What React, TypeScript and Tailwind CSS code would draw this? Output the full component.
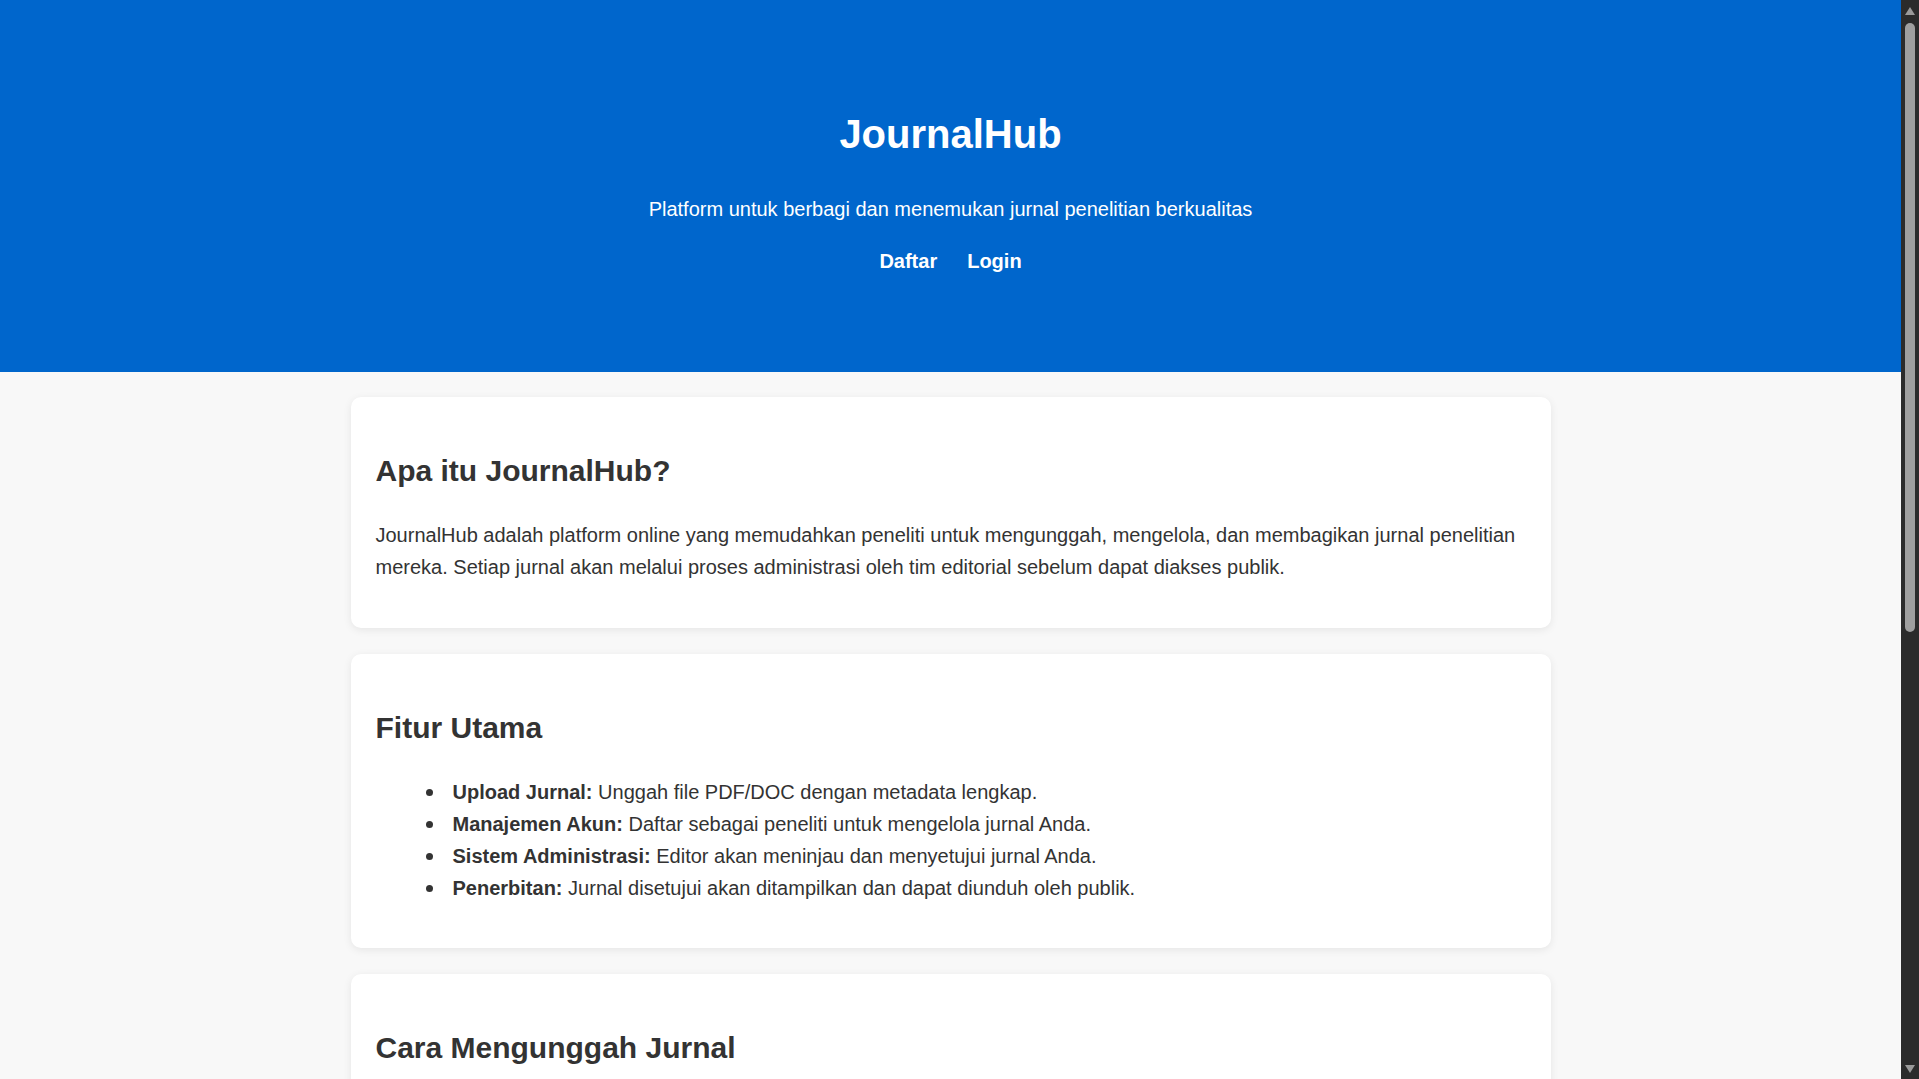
import React from "react";

const Card: React.FC<{ children: React.ReactNode }> = ({ children }) => (
  <section className="w-[1200px] mx-auto bg-white rounded-[10px] shadow-[0_2px_8px_rgba(0,0,0,0.08)] px-[25px] pt-[24px] pb-[24px]">
    {children}
  </section>
);

const H2: React.FC<{ children: React.ReactNode }> = ({ children }) => (
  <h2 className="mt-[26px] text-[30px] leading-[48px] font-bold text-[#333333]">{children}</h2>
);

const Bullet: React.FC<{ children: React.ReactNode }> = ({ children }) => (
  <li className="flex flex-row">
    <span className="w-[27px] shrink-0 flex flex-row items-start">
      <span className="mt-[13px] w-[7px] h-[7px] rounded-full bg-[#333333]" />
    </span>
    <span>{children}</span>
  </li>
);

export default function App() {
  const features = [
    ["Upload Jurnal:", "Unggah file PDF/DOC dengan metadata lengkap."],
    ["Manajemen Akun:", "Daftar sebagai peneliti untuk mengelola jurnal Anda."],
    ["Sistem Administrasi:", "Editor akan meninjau dan menyetujui jurnal Anda."],
    ["Penerbitan:", "Jurnal disetujui akan ditampilkan dan dapat diunduh oleh publik."],
  ];
  const steps = [
    "Daftar akun sebagai peneliti.",
    "Login ke dashboard Anda.",
    "Isi formulir unggah jurnal beserta metadata.",
    "Tunggu proses peninjauan oleh editor.",
  ];
  return (
    <div className="h-screen w-full overflow-hidden flex flex-row font-['Liberation_Sans',Arial,sans-serif] text-[20px] leading-[32px] text-[#333333]">
      <div className="flex-1 h-full overflow-hidden bg-[#f8f8f8] flex flex-col">
        <header className="bg-[#0066cc] text-white flex flex-col items-center pt-[102px] pb-[95px] shrink-0">
          <h1 className="text-[40px] leading-[64px] font-bold">JournalHub</h1>
          <p className="mt-[27px] text-[20px] leading-[32px]">
            Platform untuk berbagi dan menemukan jurnal penelitian berkualitas
          </p>
          <nav className="mt-[20px] flex flex-row gap-[30px] font-bold">
            <a href="#" className="text-white">Daftar</a>
            <a href="#" className="text-white">Login</a>
          </nav>
        </header>
        <main className="pt-[25px] flex flex-col gap-[26px] shrink-0">
          <Card>
            <H2>Apa itu JournalHub?</H2>
            <p className="mt-[24px] mb-[21px]">
              JournalHub adalah platform online yang memudahkan peneliti untuk mengunggah, mengelola, dan membagikan jurnal
              penelitian mereka. Setiap jurnal akan melalui proses administrasi oleh tim editorial sebelum dapat diakses publik.
            </p>
          </Card>
          <Card>
            <H2>Fitur Utama</H2>
            <ul className="mt-[24px] mb-[20px] pl-[50px]">
              {features.map(([b, t]) => (
                <Bullet key={b}>
                  <strong className="font-bold">{b}</strong> {t}
                </Bullet>
              ))}
            </ul>
          </Card>
          <Card>
            <H2>Cara Mengunggah Jurnal</H2>
            <ol className="mt-[24px] mb-[20px] pl-[77px] list-decimal">
              {steps.map((s) => (
                <li key={s}>{s}</li>
              ))}
            </ol>
          </Card>
        </main>
      </div>
      <div className="w-[18px] h-full bg-[#2b2b2b] flex flex-col items-center shrink-0">
        <svg width="12" height="10" viewBox="0 0 12 10" className="mt-[6px] shrink-0">
          <polygon points="6,1 11,9 1,9" fill="#9a9a9a" />
        </svg>
        <div className="mt-[7px] w-[10px] h-[609px] rounded-full bg-[#9f9f9f] shrink-0" />
        <div className="flex-1" />
        <svg width="12" height="10" viewBox="0 0 12 10" className="mb-[5px] shrink-0">
          <polygon points="1,1 11,1 6,9" fill="#9a9a9a" />
        </svg>
      </div>
    </div>
  );
}
